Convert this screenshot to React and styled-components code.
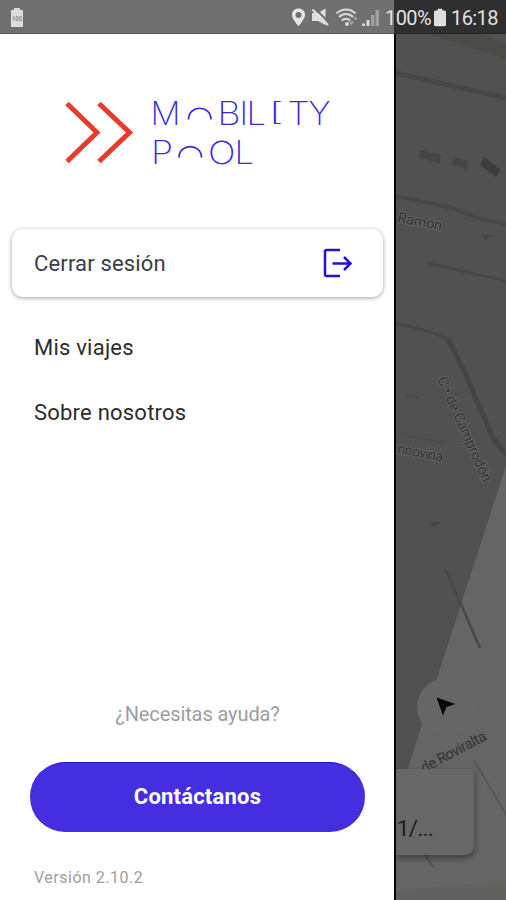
import React from 'react';
import styled, { createGlobalStyle } from 'styled-components';

const App = () => {
  return (
    <>
      <GlobalStyle />
      <Screen>
        <StatusBar>
          <ChargeIcon />
          <StatusIcons />
          <StatusText $width={46}>100%</StatusText>
          <BatteryIcon />
          <StatusText $width={47}>16:18</StatusText>
        </StatusBar>
        <Body>
          <Drawer>
            <LogoRow>
              <Logo />
            </LogoRow>
            <LogoutCard type="button">
              <Label $spacing={0.15} $color="#3b3c4c">Cerrar sesión</Label>
              <LogoutIcon />
            </LogoutCard>
            <Menu>
              <MenuItem><Label>Mis viajes</Label></MenuItem>
              <MenuItem><Label>Sobre nosotros</Label></MenuItem>
            </Menu>
            <Footer>
              <HelpText>¿Necesitas ayuda?</HelpText>
              <ContactButton type="button">Contáctanos</ContactButton>
              <Version>Versión 2.10.2</Version>
            </Footer>
          </Drawer>
          <MapPane>
            <StreetMap />
            <LocateButton type="button">
              <svg width="22" height="22" viewBox="0 0 22 22">
                <path d="M1.5 1.5 L20.5 8 L11.5 11 L8 19.5 Z" fill="#080808" />
              </svg>
            </LocateButton>
            <AddressCard>1/...</AddressCard>
          </MapPane>
        </Body>
      </Screen>
    </>
  );
};

const ChargeIcon = () => (
  <ChargeSvg width="14" height="20" viewBox="0 0 14 20">
    <path d="M4 0h6v2h3v17H1V2h3z" fill="#dcdcdc" />
    <text x="2" y="13" fontSize="7" fontWeight="700" fill="#8a8a8a" textLength="10" lengthAdjust="spacingAndGlyphs">100</text>
  </ChargeSvg>
);

const StatusIcons = () => (
  <StatusSvg width="90" height="24" viewBox="0 0 90 24">
    {/* location pin */}
    <path
      d="M7.500 2.500c-3.700 0-6.500 2.700-6.500 6.400 0 4.300 6.500 11 6.500 11S14 13.200 14 8.900c0-3.700-2.800-6.400-6.500-6.400zm0 3.400a3 3 0 1 1 0 6 3 3 0 0 1 0-6z"
      fill="#e6e6e6"
      fillRule="evenodd"
    />
    {/* muted speaker */}
    <path d="M21 7h6L34.500 2.500v16.500l-7.500-4h-6z" fill="#dedede" />
    <path d="M23.500 2 38 16.500" stroke="#707070" strokeWidth="2" />
    <path d="M21.500 3.500 37 19" stroke="#e0e0e0" strokeWidth="2.200" />
    {/* wifi */}
    <g fill="none" stroke="#dadada" strokeWidth="2">
      <path d="M45.500 7.500c5.500-5.300 13.500-5.300 19 0" />
      <path d="M48 11c4-3.900 10-3.900 14 0" />
      <path d="M50.800 14.500c2.500-2.500 5.900-2.500 8.400 0" />
    </g>
    <circle cx="56" cy="18" r="2" fill="#dadada" />
    <path d="M58 15.500h5l-2.500 4zM62.500 13.500h4l-2-3z" fill="#a9a9a9" />
    {/* signal */}
    <path d="M71 17.500h3V20h-3zM75.500 14h3v6h-3z" fill="#d8d8d8" />
    <path d="M80 9h3.500v11H80zM84.500 4h3.500v16h-3.500z" fill="#a0a0a0" />
  </StatusSvg>
);

const BatteryIcon = () => (
  <BatterySvg width="12" height="20" viewBox="0 0 13 20">
    <path d="M4 0h5v2h2.500Q13 2 13 3.500v14q0 1.500-1.500 1.500h-10Q0 19 0 17.500v-14Q0 2 1.500 2H4z" fill="#dedede" />
  </BatterySvg>
);

// x, baseline, advance width and size of every wordmark letter
const letters = [
  { char: 'M', x: 150.5, y: 125, width: 30 },
  { char: 'B', x: 217.5, y: 125, width: 23 },
  { char: 'I', x: 239.5, y: 125, width: 8.5 },
  { char: 'L', x: 246.5, y: 125, width: 19.5 },
  { char: '[', x: 268, y: 121.3, width: 16, size: 25.5, weight: 200 },
  { char: 'T', x: 287.5, y: 125, width: 22 },
  { char: 'Y', x: 308.5, y: 125, width: 22 },
  { char: 'P', x: 151, y: 163.5, width: 22 },
  { char: 'O', x: 208, y: 163.5, width: 27.5 },
  { char: 'L', x: 234.5, y: 163.5, width: 19.5 },
];

const Logo = () => (
  <LogoSvg width="268" height="66" viewBox="64 99 268 66">
    <g fill="none" stroke="#ea3a2b" strokeWidth="5">
      <path d="M67 103.500 97 132.500 67 161.500" />
      <path d="M99 103.500 129.500 132.500 99 161.500" />
    </g>
    <g fill="none" stroke="#3a2ad6" strokeWidth="1.700">
      <path d="M188.500 119.500c0-15 22.500-15 22.500 0" />
      <path d="M179 157.500c0-14.500 22.500-14.500 22.500 0" />
    </g>
    <LogoLetters>
      {letters.map((l) => (
        <text
          key={`${l.char}-${l.x}`}
          x={l.x}
          y={l.y}
          fontSize={l.size || 32}
          fontWeight={l.weight || 250}
          textLength={l.width}
          lengthAdjust="spacingAndGlyphs"
        >
          {l.char}
        </text>
      ))}
    </LogoLetters>
  </LogoSvg>
);

const LogoutIcon = () => (
  <svg width="30" height="30" viewBox="0 0 30 30" fill="none" stroke="#2412cc" strokeWidth="2.500">
    <path d="M17 2H3.500Q2 2 2 3.500v23Q2 28 3.500 28H17" />
    <path d="M9.500 15.500h18M21 9l6.500 6.500-6.500 6.500" />
  </svg>
);

const StreetMap = () => (
  <MapSvg width="110" height="866" viewBox="396 34 110 866">
    <rect x="396" y="34" width="110" height="866" fill="#515151" />
    <path d="M428 34 506 59V43L480 34z" fill="#4b4b48" />
    <path d="M396 73 506 98" stroke="#474747" strokeWidth="5" />
    <path d="M396 196 452 208 478 218 506 224" stroke="#484846" strokeWidth="4" fill="none" />
    <path d="m420 150 21 5-1 8-21-5zM454 157l14 4-1 8-15-4z" fill="#464646" />
    <path d="m484 157 17 13-5 7-16-12z" fill="#3d3d3d" />
    <path d="m482 235 9 0-5 4z" fill="#414141" />
    <path d="M427 263 506 281" stroke="#484845" strokeWidth="3" />
    <path d="M396 323 434 333 449 340" stroke="#484846" strokeWidth="3" fill="none" />
    <path d="M448 339 465 373 492 436 501 449 508 455" stroke="#454543" strokeWidth="5" fill="none" />
    <path d="M398 434 446 443" stroke="#4a4a4a" />
    <path d="m430 523 11-1-8 5z" fill="#424242" />
    <path d="M407 396l12 1" stroke="#494949" strokeWidth="2" />
    <path d="M506 466 436 681 408 768 396 806v94h110z" fill="#656565" />
    <path d="M446 570 480 648" stroke="#484848" strokeWidth="2.500" />
    <path d="M474 760 508 818" stroke="#545454" strokeWidth="1.500" />
    <path d="m425 855 8 12" stroke="#525252" strokeWidth="2" />
    <path d="M396 890 506 882v18H396z" fill="#61615f" />
    <StreetNames>
      <text transform="translate(397 222) rotate(11)" textLength="45">Ramón</text>
      <text transform="translate(397 453) rotate(11)" textLength="46">noovina</text>
      <text transform="translate(437 379) rotate(66)" textLength="114">C • de Camprodón</text>
      <text transform="translate(424 773) rotate(-28)" textLength="72">de Roviralta</text>
    </StreetNames>
  </MapSvg>
);

const GlobalStyle = createGlobalStyle`
  body {
    margin: 0;
    font-family: Roboto, 'Liberation Sans', sans-serif;
  }

  * {
    box-sizing: border-box;
  }
`;

const Screen = styled.div`
  display: flex;
  flex-direction: column;
  width: 506px;
  height: 900px;
  overflow: hidden;
  background: #fff;
`;

const StatusBar = styled.header`
  display: flex;
  align-items: center;
  flex: none;
  height: 34px;
  padding: 2px 8px 0 10px;
  background: linear-gradient(to right, #707070 394px, #2f2f2f 394px);
  border-bottom: 1px solid rgba(0, 0, 0, 0.25);
`;

const ChargeSvg = styled.svg`
  margin-right: auto;
`;

const StatusSvg = styled.svg`
  margin-right: 4px;
`;

const BatterySvg = styled.svg`
  margin: 0 5px 0 3px;
`;

const StatusText = styled.span`
  width: ${(p) => p.$width}px;
  font-size: 20px;
  letter-spacing: -0.6px;
  white-space: nowrap;
  color: #e2e2e2;
`;

const Body = styled.div`
  display: flex;
  flex: 1;
  min-height: 0;
`;

const Drawer = styled.aside`
  display: flex;
  flex-direction: column;
  flex: none;
  width: 394px;
  background: #fff;
`;

const LogoRow = styled.div`
  display: flex;
  padding: 65px 0 0 64px;
`;

const LogoSvg = styled.svg`
  display: block;
  overflow: visible;
`;

const LogoLetters = styled.g`
  font-family: Inter, sans-serif;
  fill: #3a2ad6;
`;

const LogoutCard = styled.button`
  display: flex;
  align-items: center;
  justify-content: space-between;
  height: 68px;
  margin: 64px 11px 0 12px;
  padding: 0 30px 0 22px;
  border: none;
  border-radius: 11px;
  background: #fff;
  box-shadow: 0 1px 4px rgba(0, 0, 0, 0.38);
`;

const Label = styled.span`
  font-family: Roboto, sans-serif;
  font-size: 22px;
  letter-spacing: ${(p) => p.$spacing || 0.22}px;
  white-space: nowrap;
  color: ${(p) => p.$color || '#2c2c2c'};
`;

const Menu = styled.nav`
  display: flex;
  flex-direction: column;
  padding: 18px 34px 0;
`;

const MenuItem = styled.div`
  display: flex;
  align-items: center;
  height: 65px;
`;

const Footer = styled.footer`
  display: flex;
  flex-direction: column;
  margin-top: auto;
  padding: 0 29px 12px 30px;
`;

const HelpText = styled.p`
  margin: 0 0 35px;
  font-size: 20px;
  line-height: 26px;
  letter-spacing: -0.1px;
  text-align: center;
  color: #9b9ea3;
`;

const ContactButton = styled.button`
  height: 70px;
  padding: 0 6px 2px;
  border: none;
  border-radius: 35px;
  border-top: 1px solid #2110c4;
  background: #452de0;
  font-family: Roboto, sans-serif;
  font-size: 22px;
  font-weight: 700;
  letter-spacing: 0.2px;
  color: #fff;
`;

const Version = styled.small`
  margin: 36px 0 0 4px;
  font-size: 16px;
  line-height: 20px;
  letter-spacing: 0.5px;
  color: #9a9da2;
`;

const MapPane = styled.main`
  position: relative;
  flex: 1;
  min-width: 0;
  overflow: hidden;
  border-left: 2px solid #050505;
`;

const MapSvg = styled.svg`
  display: block;
`;

const StreetNames = styled.g`
  font-size: 14.5px;
  fill: #343434;
  stroke: #636363;
  stroke-width: 2px;
  paint-order: stroke;
`;

const LocateButton = styled.button`
  position: absolute;
  left: 21px;
  top: 644px;
  display: flex;
  align-items: center;
  justify-content: center;
  width: 58px;
  height: 58px;
  padding: 0;
  border: none;
  border-radius: 50%;
  background: #666;
`;

const AddressCard = styled.div`
  position: absolute;
  left: 0;
  top: 735px;
  width: 78px;
  height: 86px;
  padding: 46px 0 0 1px;
  border-radius: 0 0 9px 0;
  background: #676767;
  box-shadow: 0 3px 6px rgba(0, 0, 0, 0.4);
  font-size: 22px;
  line-height: 28px;
  letter-spacing: -0.5px;
  color: #1c1c1c;
`;

export default App;
